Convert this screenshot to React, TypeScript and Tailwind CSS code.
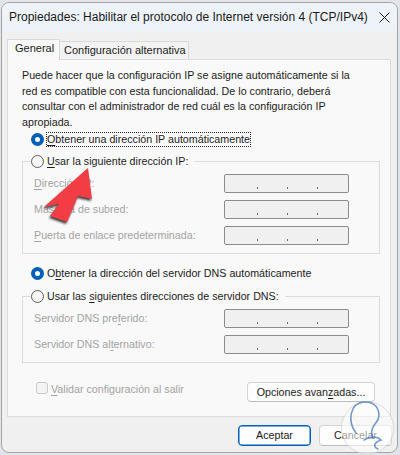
import React from "react";

const U = ({ c }: { c: string }) => (
  <span className="underline underline-offset-[2px] decoration-[1px]">{c}</span>
);

function Radio({ checked }: { checked?: boolean }) {
  return checked ? (
    <span className="w-[13px] h-[13px] rounded-full bg-[#005fb8] flex items-center justify-center shrink-0">
      <span className="w-[5px] h-[5px] rounded-full bg-white" />
    </span>
  ) : (
    <span className="w-[13px] h-[13px] rounded-full border border-[#5f5f5f] bg-[#f6f6f6] shrink-0" />
  );
}

function IpBox() {
  return (
    <div className="w-[125px] h-[19px] border border-[#8c8c8c] rounded-[2px] bg-[#f0f0f0] flex items-start pl-[32px] pt-[12px] gap-[29px]">
      <span className="w-[1px] h-[2px] bg-[#6a6a6a]" />
      <span className="w-[1px] h-[2px] bg-[#6a6a6a]" />
      <span className="w-[1px] h-[2px] bg-[#6a6a6a]" />
    </div>
  );
}

function Row({ children }: { children: React.ReactNode }) {
  return (
    <div className="flex items-center h-[19px]">
      <span className="w-[190px] text-[#a3a3a3] leading-[13px] whitespace-nowrap">{children}</span>
      <IpBox />
    </div>
  );
}

export default function App() {
  return (
    <div className="relative w-[400px] h-[455px] overflow-hidden bg-[#e1e5ea] pt-[2px] pl-[1px] font-['Liberation_Sans',Arial,sans-serif] text-[10.7px] text-[#1b1b1b]">
      <div className="w-[397px] h-[451px] border border-[#a3a3a3] rounded-[8px] overflow-hidden flex flex-col bg-[#f0f0f0]">
        {/* Title bar */}
        <div className="h-[28px] shrink-0 bg-[#eef3f9] flex items-center pl-[7px] pr-[7px]">
          <span className="text-[12px] text-[#1a1a1a] whitespace-nowrap">
            Propiedades: Habilitar el protocolo de Internet versión 4 (TCP/IPv4)
          </span>
          <svg className="ml-auto" width="11" height="11" viewBox="0 0 11 11">
            <path d="M0.5 0.5 L10.5 10.5 M10.5 0.5 L0.5 10.5" stroke="#1a1a1a" strokeWidth="1" fill="none" />
          </svg>
        </div>

        {/* Body */}
        <div className="flex-1 pt-[8px]">
          {/* Tabs */}
          <div className="ml-[5px] flex items-end h-[20px]">
            <div className="relative z-10 h-[21px] mb-[-1px] w-[53px] bg-[#f9f9f9] border-l border-t border-r border-[#d9d9d9] pl-[7px] pt-[1px] leading-[14px] text-[11px]">
              General
            </div>
            <div className="h-[18px] w-[129px] border-t border-r border-[#d9d9d9] bg-[#f3f3f3] pl-[4px] pt-[1px] leading-[14px] whitespace-nowrap text-[11px]">
              Configuración alternativa
            </div>
          </div>

          {/* Panel */}
          <div className="ml-[5px] w-[384px] h-[358px] border border-[#dcdcdc] bg-[#f9f9f9] pl-[14px] pr-[10px] pt-[8px] flex flex-col">
            <p className="leading-[15.5px] whitespace-nowrap">
              Puede hacer que la configuración IP se asigne automáticamente si la
              <br />
              red es compatible con esta funcionalidad. De lo contrario, deberá
              <br />
              consultar con el administrador de red cuál es la configuración IP
              <br />
              apropiada.
            </p>

            <div className="mt-[1px] h-[17px] flex items-center pl-[9px]">
              <Radio checked />
              <span className="ml-[2px] border border-dotted border-[#2a2a2a] leading-[13px] whitespace-nowrap">
                <U c="O" />btener una dirección IP automáticamente
              </span>
            </div>

            <fieldset className="mt-[5px] border border-[#dcdcdc] pl-[8px] pr-0 pt-[5px] pb-[8px]">
              <legend className="h-[16px] flex items-center p-0 pr-[6px]">
                <Radio />
                <span className="ml-[3px] leading-[13px] whitespace-nowrap">
                  <U c="U" />sar la siguiente dirección IP:
                </span>
              </legend>
              <div className="pl-[3px] flex flex-col gap-[7px]">
                <Row>
                  <U c="D" />irección IP:
                </Row>
                <Row>
                  Más<U c="c" />ara de subred:
                </Row>
                <Row>
                  <U c="P" />uerta de enlace predeterminada:
                </Row>
              </div>
            </fieldset>

            <div className="mt-[11px] h-[17px] flex items-center pl-[9px]">
              <Radio checked />
              <span className="ml-[3px] leading-[13px] whitespace-nowrap">
                O<U c="b" />tener la dirección del servidor DNS automáticamente
              </span>
            </div>

            <fieldset className="mt-[6px] border border-[#dcdcdc] pl-[8px] pr-0 pt-[5px] pb-[8px]">
              <legend className="h-[16px] flex items-center p-0 pr-[6px]">
                <Radio />
                <span className="ml-[3px] leading-[13px] whitespace-nowrap">
                  Usar las <U c="s" />iguientes direcciones de servidor DNS:
                </span>
              </legend>
              <div className="pl-[3px] flex flex-col gap-[7px]">
                <Row>
                  Servidor DNS pre<U c="f" />erido:
                </Row>
                <Row>
                  Servidor DNS al<U c="t" />ernativo:
                </Row>
              </div>
            </fieldset>

            <div className="mt-[19px] flex items-start">
              <span className="ml-[14px] w-[12px] h-[12px] rounded-[3px] border border-[#c9c9c9] bg-[#f5f5f5] shrink-0" />
              <span className="ml-[3px] leading-[14px] text-[#a3a3a3] whitespace-nowrap">
                <U c="V" />alidar configuración al salir
              </span>
              <button className="ml-auto mr-[5px] w-[128px] h-[20px] rounded-[4px] border border-[#d3d3d3] border-b-[#bcbcbc] bg-[#fdfdfd] leading-[13px] whitespace-nowrap">
                Opciones avan<U c="z" />adas...
              </button>
            </div>
          </div>

          {/* Dialog buttons */}
          <div className="mt-[8px] flex justify-end gap-[8px] pr-[5px]">
            <button className="w-[73px] h-[21px] rounded-[4px] border border-[#005fb8] shadow-[inset_0_0_0_0.5px_#005fb8] bg-[#fdfdfd] leading-[13px]">
              Aceptar
            </button>
            <button className="w-[73px] h-[21px] rounded-[4px] border border-[#d3d3d3] border-b-[#bcbcbc] bg-[#fdfdfd] leading-[13px]">
              Cancelar
            </button>
          </div>
        </div>
      </div>

      {/* Red arrow overlay */}
      <svg
        className="absolute left-0 top-0 pointer-events-none"
        width="400"
        height="455"
        viewBox="0 0 400 455"
        style={{ filter: "drop-shadow(-1px 2px 1.2px rgba(0,0,0,0.75))" }}
      >
        <polygon
          points="88,168 92,199 78,196 67,222 50,216 59,204 44,207"
          fill="#f23d45"
          strokeLinejoin="round"
        />
      </svg>

      {/* Watermark logo */}
      <svg className="absolute left-0 top-0 pointer-events-none" width="400" height="455" viewBox="0 0 400 455">
        <circle cx="367.5" cy="428" r="26" fill="rgba(255,255,255,0.55)" stroke="rgba(200,200,200,0.6)" strokeWidth="1" />
        <path
          d="M356 433 C347 421 350 403 364 402 C378 401 383 415 375 424 C371 429 371 434 373 438"
          fill="none"
          stroke="rgba(70,120,190,0.75)"
          strokeWidth="1.6"
          strokeLinecap="round"
        />
        <path
          d="M364 440 C370 436 377 436 381 440 C375 442 372 446 378 449"
          fill="none"
          stroke="rgba(70,120,190,0.75)"
          strokeWidth="1.6"
          strokeLinecap="round"
        />
      </svg>
    </div>
  );
}
